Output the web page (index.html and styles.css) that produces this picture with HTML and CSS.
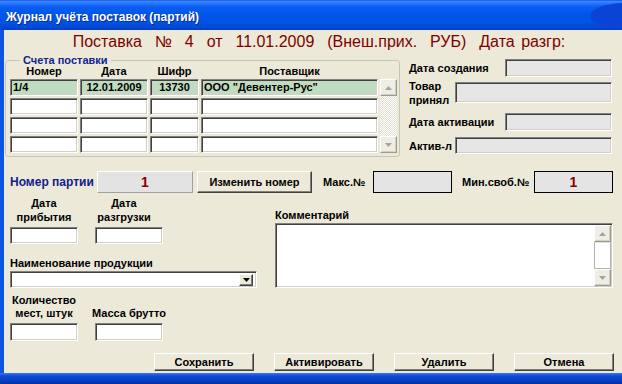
FILE: index.html
```html
<!DOCTYPE html>
<html>
<head>
<meta charset="utf-8">
<link rel="stylesheet" href="styles.css">
</head>
<body>
<div class="window">
  <div class="titlebar"><span class="title">Журнал учёта поставок (партий)</span><span class="swoosh"></span></div>
  <div class="client">
    <div class="heading">Поставка  №  4  от  11.01.2009  (Внеш.прих.  РУБ)  Дата разгр:</div>
    <div class="top">
      <fieldset class="group">
        <legend>Счета поставки</legend>
        <div class="grid">
          <div class="hd">Номер</div><div class="hd">Дата</div><div class="hd">Шифр</div><div class="hd">Поставщик</div><div></div>
          <div class="vscroll">
            <div class="sbtn"><svg width="7" height="4" viewBox="0 0 7 4"><path d="M0 4L3.5 0L7 4Z" fill="#a6a397"/></svg></div>
            <div class="sbtn"><svg width="7" height="4" viewBox="0 0 7 4"><path d="M0 0L3.5 4L7 0Z" fill="#a6a397"/></svg></div>
          </div>
          <div class="cell sunk sel">1/4</div><div class="cell sunk sel c">12.01.2009</div><div class="cell sunk sel c">13730</div><div class="cell sunk sel">ООО "Девентер-Рус"</div>
          <div class="cell sunk"></div><div class="cell sunk"></div><div class="cell sunk"></div><div class="cell sunk"></div>
          <div class="cell sunk"></div><div class="cell sunk"></div><div class="cell sunk"></div><div class="cell sunk"></div>
          <div class="cell sunk"></div><div class="cell sunk"></div><div class="cell sunk"></div><div class="cell sunk"></div>
        </div>
      </fieldset>
      <div class="info">
        <div class="irow r1"><span class="lw96">Дата создания</span><div class="sunk gray w107"></div></div>
        <div class="irow r2"><span class="lw46">Товар принял</span><div class="sunk gray w157"></div></div>
        <div class="irow r3"><span class="lw96">Дата активации</span><div class="sunk gray w107"></div></div>
        <div class="irow r4"><span class="lw46">Актив-л</span><div class="sunk gray w157"></div></div>
      </div>
    </div>
    <div class="prow">
      <span class="plabel">Номер партии</span>
      <div class="pnum">1</div>
      <div class="btn pbtn">Изменить номер</div>
      <span class="mlabel">Макс.№</span>
      <div class="flat"></div>
      <span class="mlabel2">Мин.своб.№</span>
      <div class="flat">1</div>
    </div>
    <div class="lower">
      <div class="leftcol">
        <div class="dates">
          <div class="dgroup"><div class="lbl"><span>Дата</span><span>прибытия</span></div><div class="sunk inp"></div></div>
          <div class="dgroup"><div class="lbl shift"><span>Дата</span><span>разгрузки</span></div><div class="sunk inp"></div></div>
        </div>
        <div class="nlabel">Наименование продукции</div>
        <div class="sunk combo"><div class="dd"><svg width="7" height="4" viewBox="0 0 7 4"><path d="M0 0L3.5 4L7 0Z" fill="#000"/></svg></div></div>
        <div class="qty">
          <div class="qgroup"><div class="lbl"><span>Количество</span><span>мест, штук</span></div><div class="sunk qinp"></div></div>
          <div class="qgroup"><div class="lbl"><span>Масса брутто</span></div><div class="sunk qinp"></div></div>
        </div>
      </div>
      <div class="rightcol">
        <div class="clabel">Комментарий</div>
        <div class="sunk textarea">
          <div class="cscroll">
            <div class="sbtn"><svg width="7" height="4" viewBox="0 0 7 4"><path d="M0 4L3.5 0L7 4Z" fill="#a6a397"/></svg></div>
            <div class="thumb"></div>
            <div class="sbtn"><svg width="7" height="4" viewBox="0 0 7 4"><path d="M0 0L3.5 4L7 0Z" fill="#a6a397"/></svg></div>
          </div>
        </div>
      </div>
    </div>
    <div class="btns">
      <div class="btn">Сохранить</div>
      <div class="btn">Активировать</div>
      <div class="btn">Удалить</div>
      <div class="btn">Отмена</div>
    </div>
  </div>
  <div class="bottombar"></div>
</div>
</body>
</html>
```

FILE: styles.css
```css
* { box-sizing: border-box; }
html, body { margin: 0; padding: 0; }
body {
  width: 622px; height: 384px; overflow: hidden;
  background: #0b55e4;
  font-family: "Liberation Sans", Arial, sans-serif;
  font-size: 11px; font-weight: bold; color: #000;
}
.window { width: 622px; height: 384px; display: flex; flex-direction: column; background: #0b55e4; }
.titlebar {
  position: relative; height: 30px; flex: none; overflow: hidden;
  display: flex; align-items: center; padding: 3px 0 0 6px;
  background: linear-gradient(#0a3ad0 0, #3d8cff 1px, #2a78ff 3px, #0a5df2 7px, #0056ea 14px, #0053e4 22px, #004ad8 27px, #0a3cbc 30px);
}
.title { color: #fff; font-size: 12px; font-weight: bold; text-shadow: 1px 1px 0 #0b2a8a; position: relative; z-index: 1; }
.swoosh { position: absolute; right: -40px; top: 3px; width: 72px; height: 26px; border-radius: 50%; background: #0a44d6; }
.client { flex: 1; margin-left: 4px; background: #ece9d8; display: flex; flex-direction: column; }
.bottombar { height: 11px; flex: none; background: linear-gradient(#3a78f2 0, #0a4ad8 3px, #0742c8 7px, #05309c 11px); }

.heading {
  height: 24px; padding: 1px 0 0 12px; text-align: center; white-space: pre;
  font-family: "Liberation Sans", Arial, sans-serif; font-weight: normal; font-size: 16px; line-height: 22px;
  word-spacing: 2px;
  color: #800000;
}

.sunk {
  border: 1px solid; border-color: #808080 #fff #fff #808080;
  box-shadow: inset 1px 1px 0 #404040, inset -1px -1px 0 #d4d0c8;
  background: #fff;
}
.gray { background: #e6e6e6; }

.top { display: flex; margin-left: 1px; height: 103px; }
fieldset.group {
  margin: 0; width: 395px; height: 103px; padding: 0 2px 3px 4px;
  border: 1px solid #c8c5b4; border-radius: 3px;
}
legend { margin-left: 10px; padding: 0 3px; color: #0f2590; font-size: 11px; line-height: 12px; }
.grid {
  display: grid;
  grid-template-columns: 68px 68px 49px 177px 17px;
  grid-template-rows: 11px 17px 17px 17px 17px;
  column-gap: 2px; row-gap: 2px;
}
.hd { text-align: center; line-height: 11px; white-space: nowrap; }
.cell { line-height: 15px; padding: 0 2px; white-space: nowrap; overflow: hidden; }
.sel { background: #c0dcc0; }
.c { text-align: center; }
.vscroll {
  grid-column: 5; grid-row: 2 / 6;
  display: flex; flex-direction: column; justify-content: space-between;
  background: repeating-conic-gradient(#fff 0 25%, #e2dfd1 0 50%) 0 0 / 2px 2px;
}
.sbtn {
  height: 17px; flex: none; display: flex; align-items: center; justify-content: center;
  background: #efeee6; border: 1px solid; border-color: #fff #9d9b8e #9d9b8e #fff;
  box-shadow: inset -1px -1px 0 #d2d0c5;
}

.info { margin-left: 9px; width: 204px; display: flex; flex-direction: column; padding-top: 5px; }
.irow { display: flex; align-items: center; }
.irow span { line-height: 14px; }
.r1 { height: 18px; }
.r2 { height: 21px; margin-top: 5px; }
.r3 { height: 18px; margin-top: 10px; }
.r4 { height: 17px; margin-top: 6px; }
.irow .sunk { height: 100%; }
.lw96 { width: 96px; flex: none; }
.lw46 { width: 46px; flex: none; }
.w107 { width: 107px; }
.w157 { width: 157px; }

.prow { display: flex; align-items: center; height: 22px; margin-top: 14px; padding-left: 6px; }
.plabel { width: 87px; flex: none; color: #10208c; font-size: 12px; white-space: nowrap; }
.pnum {
  width: 96px; height: 22px; background: #e3e3e3;
  border: 1px solid; border-color: #fff #a0a0a0 #a0a0a0 #fff;
  color: #8b0000; font-size: 14px; text-align: center; line-height: 20px;
}
.btn {
  width: 100px; height: 18px; background: #ece9d8;
  border: 1px solid; border-color: #fff #404040 #404040 #fff;
  box-shadow: inset -1px -1px 0 #808080;
  display: flex; align-items: center; justify-content: center; white-space: nowrap;
}
.pbtn { margin-left: 4px; width: 115px; height: 22px; }
.mlabel { margin-left: 11px; width: 50px; flex: none; }
.mlabel2 { margin-left: 10px; width: 72px; flex: none; }
.flat {
  width: 79px; height: 22px; border: 1px solid #000; background: #e4e4e4;
  color: #8b0000; font-size: 14px; text-align: center; line-height: 20px;
}

.lower { display: grid; grid-template-columns: 248px 338px; column-gap: 17px; padding-left: 6px; }
.leftcol { display: flex; flex-direction: column; }
.dates { display: flex; gap: 17px; margin-top: 3px; }
.dgroup, .qgroup { width: 68px; display: flex; flex-direction: column; }
.lbl { display: flex; flex-direction: column; align-items: center; white-space: nowrap; }
.dgroup .lbl { line-height: 14px; height: 28px; margin-bottom: 3px; }
.shift { margin-left: -5px; margin-right: 5px; }
.inp { height: 17px; }
.nlabel { margin-top: 12px; line-height: 14px; }
.combo { margin-top: 1px; width: 247px; height: 17px; display: flex; justify-content: flex-end; align-items: center; padding-right: 3px; }
.dd {
  width: 14px; height: 12px; display: flex; align-items: center; justify-content: center;
  background: #ece9d8; border: 1px solid; border-color: #fff #404040 #404040 #fff;
  box-shadow: inset -1px -1px 0 #808080;
}
.qty { display: flex; gap: 17px; margin-top: 6px; align-items: flex-end; }
.qgroup .lbl { line-height: 13px; margin-bottom: 3px; }
.qinp { height: 18px; }

.clabel { margin-top: 15px; line-height: 14px; }
.textarea { margin-top: 1px; height: 65px; width: 338px; display: flex; justify-content: flex-end; padding: 1px; }
.cscroll { width: 17px; display: flex; flex-direction: column; background: #fff; }
.thumb { flex: 1; border: 1px solid #b5b3a8; border-top-color: #e0ded6; background: #fff; }

.btns { display: flex; gap: 20px; padding-left: 150px; margin-top: 12px; }
```
